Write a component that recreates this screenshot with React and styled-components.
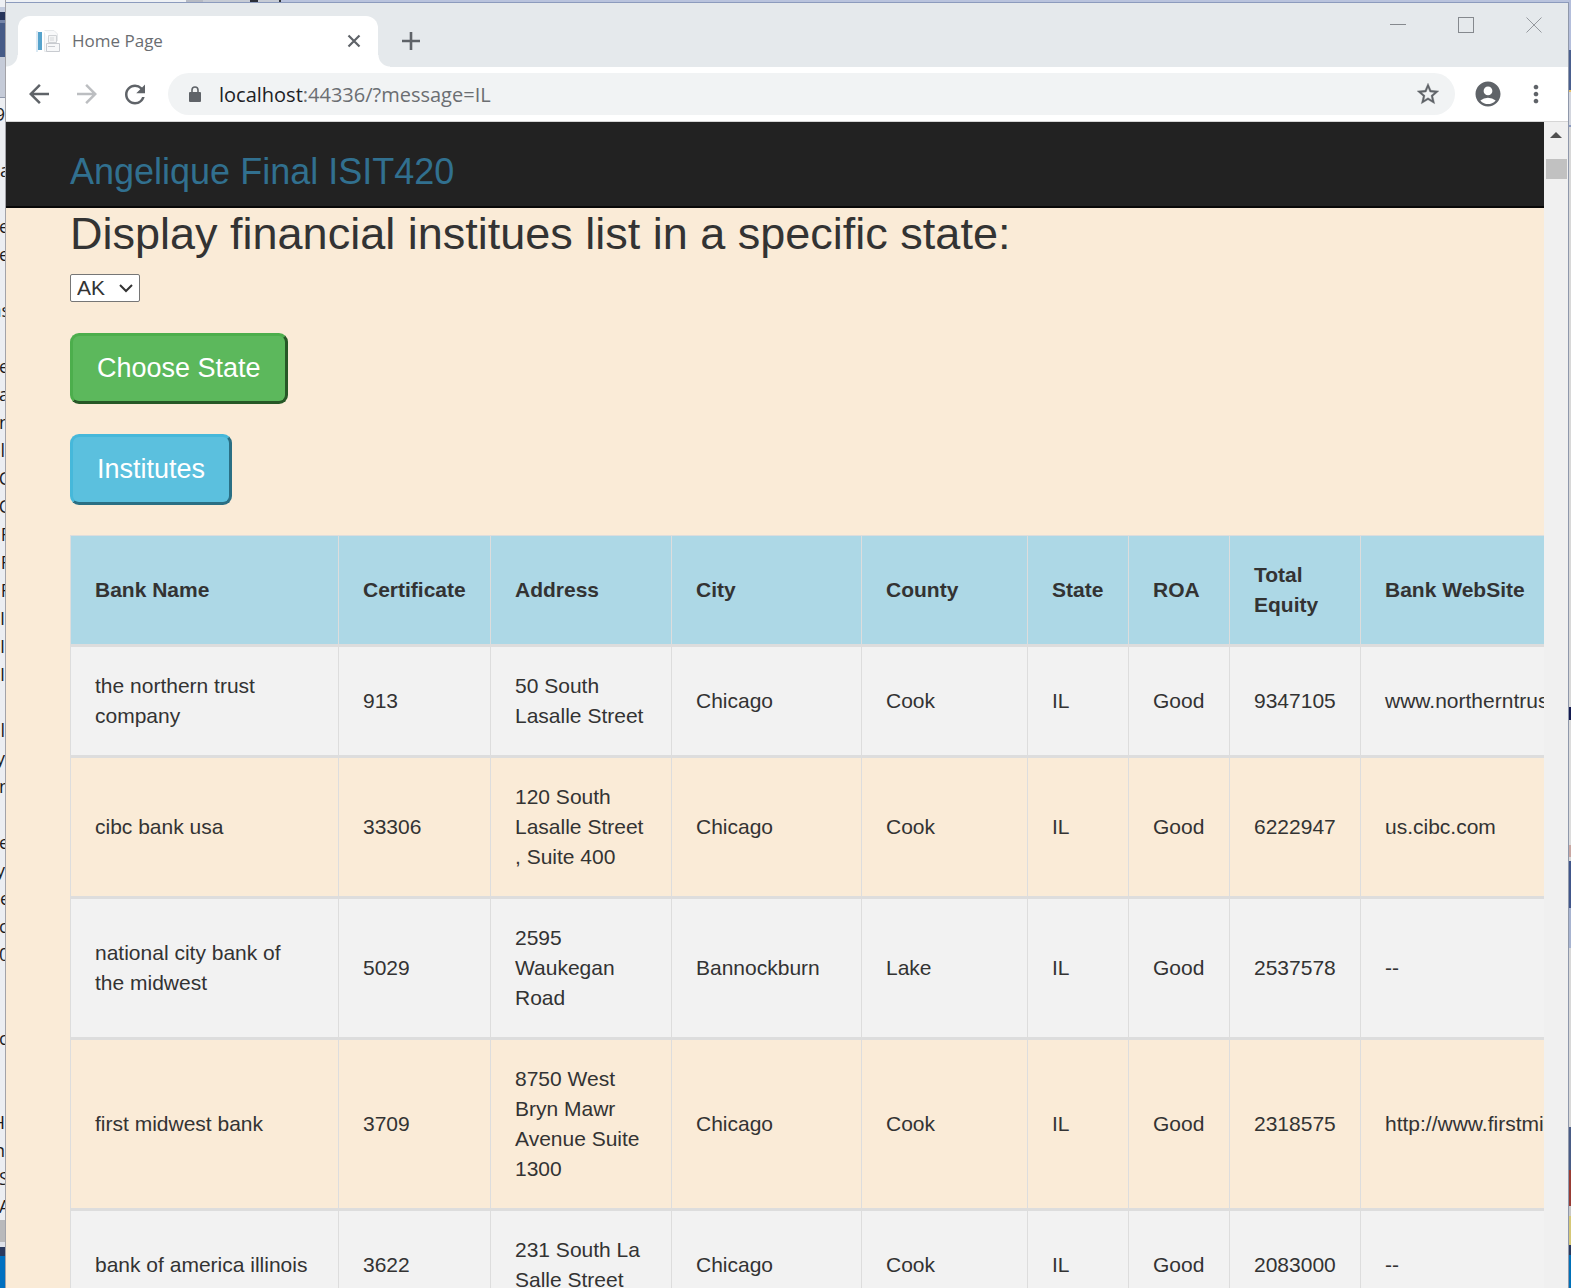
import React from "react";
import styled, { createGlobalStyle } from "styled-components";
import {
  MdArrowBack,
  MdArrowForward,
  MdRefresh,
  MdStarBorder,
  MdAccountCircle,
  MdMoreVert,
} from "react-icons/md";

const GlobalStyle = createGlobalStyle`
  *, *::before, *::after { box-sizing: border-box; }
  body {
    margin: 0;
    font-family: "Liberation Sans", Arial, sans-serif;
    color: #333;
    overflow: hidden;
  }
  button, select, input { font: inherit; color: inherit; }
`;

const Desktop = styled.div`
  display: grid;
  grid-template-columns: 6px minmax(0, 1fr) 2px;
  height: 100vh;
  overflow: hidden;
  background: #b9c3dd;
`;

const Middle = styled.div`
  display: flex;
  flex-direction: column;
  min-width: 0;
  min-height: 0;
`;

const BackdropEdge = styled.div`
  display: flex;
  flex: none;
  height: 2px;
`;

const Segment = styled.div`
  width: ${(p) => p.$w}px;
  background: ${(p) => p.$color};
`;

const Strip = styled.div`
  display: flex;
  flex-direction: column;
  overflow: hidden;
  background: ${(p) => p.$color};
  border-right: ${(p) => (p.$edge ? "1px solid #a3a3a8" : "0")};
`;

const Band = styled.div`
  flex: none;
  height: ${(p) => p.$h}px;
  background: ${(p) => p.$color};
`;

const Fragment = styled.div`
  flex: none;
  display: flex;
  justify-content: ${(p) => (p.$side === "start" ? "flex-start" : "flex-end")};
  height: 28px;
  margin-left: ${(p) => (p.$side === "start" ? "-1px" : "0")};
  margin-right: ${(p) => (p.$side === "tail" ? "-5px" : "0")};
  font-family: "Open Sans", sans-serif;
  font-size: 18px;
  line-height: 28px;
  white-space: nowrap;
  color: #1c1c1c;
`;

const Window = styled.div`
  display: flex;
  flex: 1;
  flex-direction: column;
  min-height: 0;
  border-top: 1px solid #8c9bbd;
  border-right: 1px solid #8f98ab;
  background: #fff;
`;

const TabStrip = styled.div`
  display: flex;
  align-items: flex-end;
  height: 64px;
  padding-left: 12px;
  background: #e5e9ec;
`;

const Tab = styled.div`
  position: relative;
  display: flex;
  align-items: center;
  width: 360px;
  height: 51px;
  padding: 0 13px 2px 18px;
  border-radius: 12px 12px 0 0;
  background: #fff;

  &::before,
  &::after {
    content: "";
    position: absolute;
    bottom: 0;
    width: 12px;
    height: 12px;
  }
  &::before {
    left: -12px;
    background: radial-gradient(circle at 0 0, transparent 11px, #fff 12px);
  }
  &::after {
    right: -12px;
    background: radial-gradient(circle at 100% 0, transparent 11px, #fff 12px);
  }
`;

const TabTitle = styled.span`
  flex: 1;
  margin-left: 12px;
  font-family: "Open Sans", sans-serif;
  font-size: 17px;
  line-height: 24px;
  color: #6a6d71;
`;

const IconButton = styled.button`
  display: flex;
  flex: none;
  align-items: center;
  justify-content: center;
  width: ${(p) => p.$w || 30}px;
  height: 30px;
  padding: 0;
  border: 0;
  background: none;
  color: ${(p) => (p.disabled ? "#bcbec1" : "#5f6368")};

  path[fill="none"] {
    stroke: none;
  }
`;

const NewTab = styled(IconButton)`
  align-self: center;
  margin: 12px 0 0 18px;
`;

const WindowControls = styled.div`
  display: flex;
  align-self: flex-start;
  gap: 38px;
  margin-left: auto;
  padding: 7px 19px 0 0;
`;

const Outline = styled.rect`
  fill: transparent;
  stroke: #85898e;
`;

const Toolbar = styled.div`
  display: flex;
  align-items: center;
  gap: 18px;
  height: 55px;
  padding: 0 17px 0 18px;
  border-bottom: 1px solid #d6d6d6;
`;

const Omnibox = styled.div`
  display: flex;
  flex: 1;
  align-items: center;
  height: 42px;
  padding: 0 12px 0 21px;
  border-radius: 21px;
  background: #f1f3f4;
  color: #5f6368;
`;

const Address = styled.div`
  flex: 1;
  margin-left: 18px;
  padding-top: 2px;
  font-family: "Open Sans", sans-serif;
  font-size: 20px;
  line-height: 30px;
  color: #6b6e72;
`;

const Host = styled.span`
  color: #202124;
`;

const Viewport = styled.div`
  display: flex;
  flex: 1;
  min-height: 0;
`;

const Page = styled.main`
  flex: 1;
  min-width: 0;
  overflow: hidden;
  background: #faebd7;
`;

const Navbar = styled.header`
  height: 86px;
  padding: 30px 64px 0;
  border-bottom: 2px solid #080808;
  background: #222;
`;

const Brand = styled.a`
  display: block;
  font-size: 36px;
  line-height: 40px;
  color: #31708f;
  text-decoration: none;
`;

const Content = styled.form`
  display: flex;
  flex-direction: column;
  align-items: flex-start;
  padding-left: 64px;
`;

const Heading = styled.h1`
  margin: 0 0 14px;
  font-size: 45px;
  font-weight: 400;
  line-height: 52px;
  white-space: nowrap;
`;

const SelectWrap = styled.div`
  position: relative;
  display: flex;
  margin-bottom: 31px;

  svg {
    position: absolute;
    top: 10px;
    right: 7px;
    pointer-events: none;
  }
`;

const StateSelect = styled.select`
  appearance: none;
  width: 70px;
  height: 28px;
  padding: 0 6px;
  border: 1px solid #767676;
  border-radius: 2px;
  background: #fff;
  font-size: 21px;
  line-height: 26px;
`;

const tones = {
  success: { fill: "#5cb85c", light: "#4cae4c", dark: "#265726" },
  info: { fill: "#5bc0de", light: "#46b8da", dark: "#2a6f84" },
};

const ActionButton = styled.button`
  height: 71px;
  margin-bottom: 30px;
  padding: 0 24px 2px;
  border: 3px solid;
  border-color: ${(p) => {
    const t = tones[p.$tone];
    return `${t.light} ${t.dark} ${t.dark} ${t.light}`;
  }};
  border-radius: 9px;
  background: ${(p) => tones[p.$tone].fill};
  font-size: 27px;
  line-height: 36px;
  color: #fff;
`;

const Table = styled.table`
  width: 1710px;
  table-layout: fixed;
  border-collapse: separate;
  border-spacing: 0;
  border-top: 1px solid #ddd;
  font-size: 21px;
  line-height: 30px;
  text-align: left;
`;

const Column = styled.col`
  width: ${(p) => p.$w}px;
`;

const HeadCell = styled.th`
  padding: 24px;
  border-left: 1px solid #ddd;
  background: #add8e6;
  vertical-align: middle;
`;

const Cell = styled.td`
  padding: 24px;
  border-top: 3px solid #ddd;
  border-left: 1px solid #ddd;
  white-space: ${(p) => (p.$nowrap ? "nowrap" : "pre-line")};
  vertical-align: middle;
`;

const Row = styled.tr`
  &:nth-child(odd) {
    background: #f2f2f2;
  }
`;

const Scrollbar = styled.div`
  display: flex;
  flex: none;
  flex-direction: column;
  align-items: center;
  width: 24px;
  padding-top: 10px;
  background: #f0f0f0;
`;

const Thumb = styled.div`
  width: 21px;
  height: 20px;
  margin-top: 21px;
  background: #c1c1c1;
`;

const columns = [
  ["Bank Name", 268],
  ["Certificate", 152],
  ["Address", 181],
  ["City", 190],
  ["County", 166],
  ["State", 101],
  ["ROA", 101],
  ["Total Equity", 131],
  ["Bank WebSite", 420],
];

const banks = [
  ["the northern trust company", "913", "50 South Lasalle Street", "Chicago", "Cook", "IL", "Good", "9347105", "www.northerntrust.com"],
  ["cibc bank usa", "33306", "120 South\nLasalle Street\n, Suite 400", "Chicago", "Cook", "IL", "Good", "6222947", "us.cibc.com"],
  ["national city bank of the midwest", "5029", "2595 Waukegan Road", "Bannockburn", "Lake", "IL", "Good", "2537578", "--"],
  ["first midwest bank", "3709", "8750 West Bryn Mawr Avenue Suite 1300", "Chicago", "Cook", "IL", "Good", "2318575", "http://www.firstmidwest.com"],
  ["bank of america illinois", "3622", "231 South La Salle Street", "Chicago", "Cook", "IL", "Good", "2083000", "--"],
];

const topSegments = [
  [180, "#eef1f5"],
  [17, "#b6bac4"],
  [47, "#c6cbd5"],
  [8, "#2b2f38"],
  [21, "#c6cbd5"],
  [2, "#33363d"],
];

const leftBands = [
  [7, "#eef0f4"],
  [5, "#c3cbdd"],
  [8, "#26345a"],
  [3, "#7484a8"],
  [34, "#465b87"],
  [40, "#c5cbd8"],
  [1, "#8f98ab"],
  [2, "#eef0f4"],
];

const leftLines = [
  ["9", "end"], [""], ["Da", "tail"], [""], ["e", "start"], ["e", "start"], [""],
  ["as", "tail"], [""], ["e", "start"], ["a", "start"], ["rn", "tail"], ["ol", "end"],
  [".C", "tail"], [".C", "tail"], [".F", "tail"], [".F", "tail"], [".F", "tail"],
  [".I", "end"], [".I", "end"], [".I", "end"], [""], ["al", "end"], ["y", "end"],
  ["n", "start"], [""], ["e", "start"], ["y", "end"], ["le", "tail"], ["c", "start"],
  ["0", "start"], [""], [""], ["c", "start"], [""], [""], ["H", "end"], ["n", "end"],
  ["S", "start"], ["A", "start"],
];

const leftFoot = [
  [22, "#b9b9bb"],
  [5, "#dfe2ea"],
  [9, "#2b3a5e"],
  [40, "#0070c0"],
];

const rightBands = [
  [50, "#b4bedb"],
  [40, "#4a5f8e"],
  [2, "#e8c26a"],
  [33, "#d3d6de"],
  [2, "#8c9bc0"],
  [580, "#d8d8d8"],
  [13, "#141b50"],
  [125, "#dcdcdc"],
  [12, "#c9a7a2"],
  [4, "#d8d8d8"],
  [47, "#41568a"],
  [40, "#a8b4d0"],
  [179, "#d8d8d8"],
  [43, "#4a5c85"],
  [36, "#983c34"],
  [10, "#c9c9c9"],
  [29, "#d6c877"],
  [10, "#2b3a5e"],
  [40, "#0070b8"],
];

function Favicon() {
  return (
    <svg width="24" height="24" viewBox="0 0 24 24" aria-hidden="true">
      <rect x="0" y="2" width="2" height="21" fill="#dceaf4" />
      <rect x="2" y="3" width="4" height="18" fill="#56a3cc" />
      <path d="M8.500 3.500V22.500H19.500M8.500 1.500H18L21.500 5V12" fill="#f8f9fa" stroke="#e6e9eb" />
      <path d="M12.500 6.500H20.500V13.500H12.500Z" fill="#f4f5f6" stroke="#cfd2d5" />
      <path d="M14 9H18M14 11H18" stroke="#d5d8da" />
      <path d="M10.500 14.500H23.500V22.500H10.500Z" fill="#f7f8f9" stroke="#c8cbd0" />
      <path d="M12 17.500H19" stroke="#c8cbd0" />
    </svg>
  );
}

function LockIcon() {
  return (
    <svg width="12" height="17" viewBox="0 0 12 17" aria-hidden="true">
      <rect x="0" y="6" width="12" height="10" rx="1" fill="#5f6368" />
      <path d="M3 7V4A3 3 0 0 1 9 4V7" fill="none" stroke="#5f6368" strokeWidth="1.600" />
    </svg>
  );
}

export default function App() {
  return (
    <>
      <GlobalStyle />
      <Desktop>
        <Strip $color="#eceef2" $edge aria-hidden="true">
          {leftBands.map(([h, color], i) => (
            <Band key={i} $h={h} $color={color} />
          ))}
          {leftLines.map(([text, side], i) => (
            <Fragment key={i} $side={side}>
              {text}
            </Fragment>
          ))}
          {leftFoot.map(([h, color], i) => (
            <Band key={i} $h={h} $color={color} />
          ))}
        </Strip>

        <Middle>
          <BackdropEdge aria-hidden="true">
            {topSegments.map(([w, color], i) => (
              <Segment key={i} $w={w} $color={color} />
            ))}
          </BackdropEdge>
          <Window>
            <TabStrip>
              <Tab>
                <Favicon />
                <TabTitle>Home Page</TabTitle>
                <IconButton $w={22} aria-label="Close tab">
                  <svg width="14" height="14" viewBox="0 0 14 14">
                    <path d="M1.500 1.500L12.500 12.500M12.500 1.500L1.500 12.500" stroke="currentColor" strokeWidth="2.200" />
                  </svg>
                </IconButton>
              </Tab>
              <NewTab aria-label="New tab">
                <svg width="18" height="18" viewBox="0 0 18 18">
                  <path d="M9 0V18M0 9H18" stroke="currentColor" strokeWidth="2.600" />
                </svg>
              </NewTab>
              <WindowControls>
                <IconButton aria-label="Minimize">
                  <svg width="16" height="16" viewBox="0 0 16 16">
                    <path d="M0 7.500H16" stroke="#85898e" />
                  </svg>
                </IconButton>
                <IconButton aria-label="Maximize">
                  <svg width="16" height="16" viewBox="0 0 16 16">
                    <Outline x="0.500" y="0.500" width="15" height="15" />
                  </svg>
                </IconButton>
                <IconButton aria-label="Close">
                  <svg width="16" height="16" viewBox="0 0 16 16">
                    <path d="M0.500 0.500L15.500 15.500M15.500 0.500L0.500 15.500" stroke="#95999e" />
                  </svg>
                </IconButton>
              </WindowControls>
            </TabStrip>

            <Toolbar>
              <IconButton aria-label="Back">
                <MdArrowBack size={30} />
              </IconButton>
              <IconButton aria-label="Forward" disabled>
                <MdArrowForward size={30} />
              </IconButton>
              <IconButton aria-label="Reload">
                <MdRefresh size={31} />
              </IconButton>
              <Omnibox>
                <LockIcon />
                <Address>
                  <Host>localhost</Host>:44336/?message=IL
                </Address>
                <IconButton aria-label="Bookmark">
                  <MdStarBorder size={26} stroke="currentColor" strokeWidth="0.300" />
                </IconButton>
              </Omnibox>
              <IconButton aria-label="Profile">
                <MdAccountCircle size={34} />
              </IconButton>
              <IconButton aria-label="Menu">
                <MdMoreVert size={28} />
              </IconButton>
            </Toolbar>

            <Viewport>
              <Page>
                <Navbar>
                  <Brand href="#">Angelique Final ISIT420</Brand>
                </Navbar>
                <Content onSubmit={(e) => e.preventDefault()}>
                  <Heading>Display financial institues list in a specific state:</Heading>
                  <SelectWrap>
                    <StateSelect aria-label="State" defaultValue="AK">
                      <option>AK</option>
                      <option>IL</option>
                    </StateSelect>
                    <svg width="14" height="9" viewBox="0 0 14 9" aria-hidden="true">
                      <path d="M1 1L7 7L13 1" fill="none" stroke="#333" strokeWidth="2" />
                    </svg>
                  </SelectWrap>
                  <ActionButton $tone="success">Choose State</ActionButton>
                  <ActionButton $tone="info">Institutes</ActionButton>
                  <Table>
                    <colgroup>
                      {columns.map(([name, w]) => (
                        <Column key={name} $w={w} />
                      ))}
                    </colgroup>
                    <thead>
                      <tr>
                        {columns.map(([name]) => (
                          <HeadCell key={name} scope="col">
                            {name}
                          </HeadCell>
                        ))}
                      </tr>
                    </thead>
                    <tbody>
                      {banks.map((bank) => (
                        <Row key={bank[1]}>
                          {bank.map((value, i) => (
                            <Cell key={columns[i][0]} $nowrap={i === 8}>
                              {value}
                            </Cell>
                          ))}
                        </Row>
                      ))}
                    </tbody>
                  </Table>
                </Content>
              </Page>
              <Scrollbar aria-hidden="true">
                <svg width="12" height="6" viewBox="0 0 12 6">
                  <path d="M0 6L6 0L12 6Z" fill="#505050" />
                </svg>
                <Thumb />
              </Scrollbar>
            </Viewport>
          </Window>
        </Middle>

        <Strip $color="#d8d8d8" aria-hidden="true">
          {rightBands.map(([h, color], i) => (
            <Band key={i} $h={h} $color={color} />
          ))}
        </Strip>
      </Desktop>
    </>
  );
}
